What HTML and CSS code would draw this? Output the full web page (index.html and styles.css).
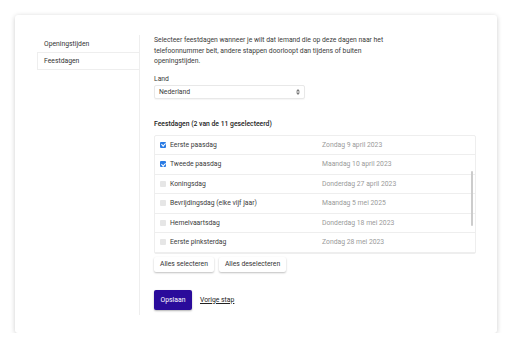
FILE: index.html
```html
<!DOCTYPE html>
<html lang="nl">
<head>
<meta charset="utf-8">
<link rel="stylesheet" href="styles.css">
</head>
<body>
<div class="card">
  <nav class="sidebar">
    <div class="nav-item">Openingstijden</div>
    <div class="nav-item active">Feestdagen</div>
  </nav>
  <main class="content">
    <p class="intro">Selecteer feestdagen wanneer je wilt dat iemand die op deze dagen naar het telefoonnummer belt, andere stappen doorloopt dan tijdens of buiten openingstijden.</p>
    <label class="label">Land</label>
    <div class="select"><span>Nederland</span><span class="arrows"><svg width="4" height="6" viewBox="0 0 4 6"><path d="M2 0 L4 2.4 H0 Z M2 6 L4 3.6 H0 Z" fill="#777"/></svg></span></div>
    <h2 class="heading">Feestdagen (2 van de 11 geselecteerd)</h2>
    <div class="table">
      <div class="row"><span class="name"><span class="cb on"></span>Eerste paasdag</span><span class="date">Zondag 9 april 2023</span></div>
      <div class="row"><span class="name"><span class="cb on"></span>Tweede paasdag</span><span class="date">Maandag 10 april 2023</span></div>
      <div class="row"><span class="name"><span class="cb"></span>Koningsdag</span><span class="date">Donderdag 27 april 2023</span></div>
      <div class="row"><span class="name"><span class="cb"></span>Bevrijdingsdag (elke vijf jaar)</span><span class="date">Maandag 5 mei 2025</span></div>
      <div class="row"><span class="name"><span class="cb"></span>Hemelvaartsdag</span><span class="date">Donderdag 18 mei 2023</span></div>
      <div class="row"><span class="name"><span class="cb"></span>Eerste pinksterdag</span><span class="date">Zondag 28 mei 2023</span></div>
      <div class="scrollbar"></div>
    </div>
    <div class="btns">
      <button class="btn">Alles selecteren</button>
      <button class="btn">Alles deselecteren</button>
    </div>
    <div class="actions">
      <button class="primary">Opslaan</button>
      <a class="link" href="#">Vorige stap</a>
    </div>
  </main>
</div>
</body>
</html>
```
FILE: styles.css
```css
* { box-sizing: border-box; }
body {
  margin: 0;
  background: #fff;
  font-family: Roboto, "Liberation Sans", sans-serif;
  color: #3a3a3a;
  font-size: 6.8px;
}
.card {
  margin: 15px 0 0 15px;
  width: 482px;
  height: 318px;
  background: #fff;
  border-radius: 3px;
  box-shadow: 0 1px 5px rgba(0,0,0,0.2);
  padding: 20px 22px 18px 22px;
  display: grid;
  grid-template-columns: 102px 1fr;
}
.sidebar {
  display: flex;
  flex-direction: column;
}
.nav-item {
  height: 18px;
  line-height: 18px;
  padding-left: 7px;
  color: #333;
  border-bottom: 1px solid #eee;
}
.nav-item.active {
  border-left: 1px solid #eee;
  padding-left: 6px;
  height: 17px;
  line-height: 17px;
}
.content {
  border-left: 1px solid #eee;
  padding-left: 14px;
  display: flex;
  flex-direction: column;
  align-items: flex-start;
}
.intro {
  margin: 0;
  width: 236px;
  line-height: 10.5px;
}
.label {
  margin-top: 7px;
  line-height: 10px;
}
.select {
  margin-top: 1px;
  width: 151px;
  height: 14px;
  border: 1px solid #e8e8e8;
  border-radius: 2px;
  padding: 0 4px;
  display: flex;
  align-items: center;
  justify-content: space-between;
  box-shadow: 0 1px 1px rgba(0,0,0,0.04);
}
.arrows { display: flex; }
.heading {
  margin: 20px 0 0;
  font-size: 6.8px;
  font-weight: 500;
  line-height: 10px;
  color: #222;
}
.table {
  position: relative;
  margin-top: 6px;
  width: 322px;
  border: 1px solid #eee;
  border-radius: 2px;
}
.row {
  height: 19.5px;
  display: grid;
  grid-template-columns: 167px 1fr;
  align-items: center;
  border-bottom: 1px solid #eee;
}
.row:last-of-type { border-bottom: none; }
.name {
  display: flex;
  align-items: center;
  padding-left: 5px;
}
.cb {
  width: 6px;
  height: 6px;
  border-radius: 1px;
  background: #e6e6e6;
  margin-right: 4px;
  position: relative;
}
.cb.on { background: #2a7be4; }
.cb.on::after {
  content: "";
  position: absolute;
  left: 1.6px;
  top: 0.6px;
  width: 1.6px;
  height: 3.2px;
  border: solid #fff;
  border-width: 0 1px 1px 0;
  transform: rotate(45deg);
}
.date { color: #9a9a9a; }
.scrollbar {
  position: absolute;
  right: 2px;
  top: 35px;
  width: 2px;
  height: 55px;
  background: #ccc;
  border-radius: 1px;
}
.btns {
  display: flex;
  gap: 5px;
  margin-top: 3px;
}
.btn {
  font: inherit;
  color: #333;
  background: #fff;
  border: none;
  height: 15px;
  padding: 0 6px;
  border-radius: 2px;
  box-shadow: 0 1px 2px rgba(0,0,0,0.25);
}
.actions {
  margin-top: 18px;
  display: flex;
  align-items: center;
  gap: 8px;
}
.primary {
  font: inherit;
  color: #fff;
  background: #2a0b9b;
  border: none;
  border-radius: 2px;
  height: 20px;
  width: 38px;
  padding: 0;
  box-shadow: 0 1px 2px rgba(0,0,0,0.3);
}
.link {
  color: #222;
  text-decoration: underline;
}
```
